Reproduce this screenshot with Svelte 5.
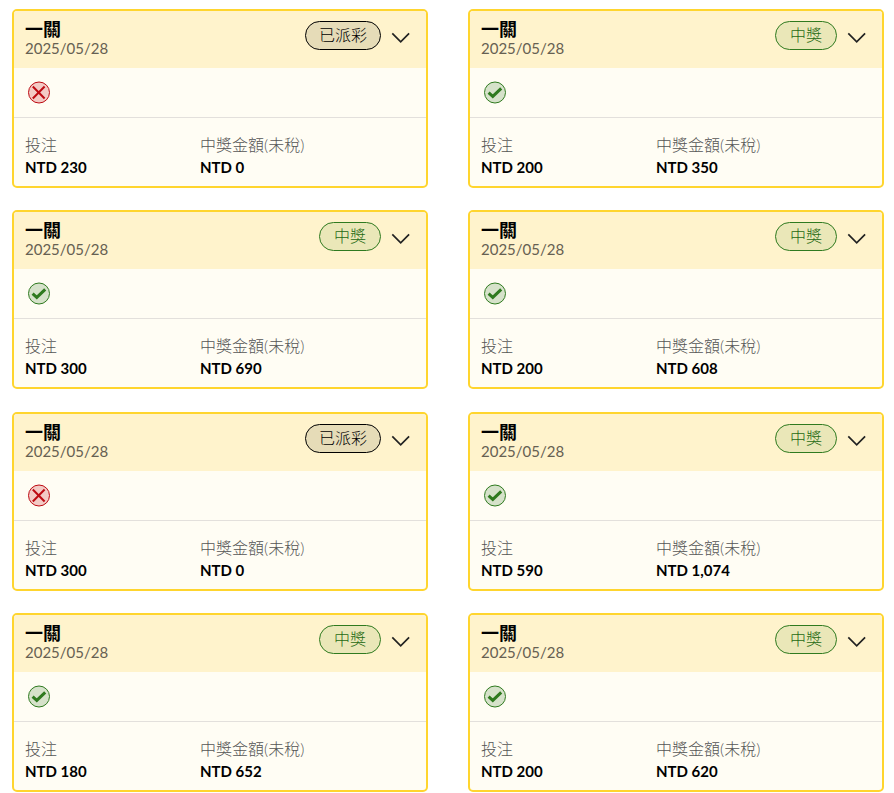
<script>
  const bets = [
    { id: 1, won: false, stake: '230', payout: '0' },
    { id: 2, won: true, stake: '200', payout: '350' },
    { id: 3, won: true, stake: '300', payout: '690' },
    { id: 4, won: true, stake: '200', payout: '608' },
    { id: 5, won: false, stake: '300', payout: '0' },
    { id: 6, won: true, stake: '590', payout: '1,074' },
    { id: 7, won: true, stake: '180', payout: '652' },
    { id: 8, won: true, stake: '200', payout: '620' }
  ];
  let selected = $state(null);
</script>

<main>
  {#each bets as bet (bet.id)}
    <article class:won={bet.won}>
      <header>
        <div class="heading">
          <h2>一關</h2>
          <time datetime="2025-05-28">2025/05/28</time>
        </div>
        <span class="status">{bet.won ? '中獎' : '已派彩'}</span>
        <button
          type="button"
          aria-label="展開"
          aria-expanded={selected === bet.id}
          onclick={() => (selected = selected === bet.id ? null : bet.id)}
        >
          <svg width="20" height="12" viewBox="0 0 20 12" aria-hidden="true">
            <path d="M1.3 1.3 9.7 9.8 18.1 1.3" fill="none" stroke="#222" stroke-width="1.7" />
          </svg>
        </button>
      </header>
      <div class="result">
        <svg width="24" height="24" viewBox="0 0 24 24" aria-hidden="true">
          {#if bet.won}
            <circle cx="12" cy="11.5" r="10.5" fill="#d6e2ca" stroke="#2f7a1f" />
            <path d="M5.6 11.6 9.8 15.4 18.2 7.4" fill="none" stroke="#2f7a1f" stroke-width="3" />
          {:else}
            <circle cx="12" cy="11.5" r="10.5" fill="#f3cac5" stroke="#bd0a12" />
            <path d="M5.8 5.5 17.6 17.5M17.6 5.5 5.8 17.5" fill="none" stroke="#bd0a12" stroke-width="2" />
          {/if}
        </svg>
      </div>
      <dl>
        <div>
          <dt>投注</dt>
          <dd>NTD {bet.stake}</dd>
        </div>
        <div>
          <dt>中獎金額(未稅)</dt>
          <dd>NTD {bet.payout}</dd>
        </div>
      </dl>
    </article>
  {/each}
</main>

<style>
  :global(body) {
    margin: 0;
    background: #fff;
  }
  main {
    box-sizing: border-box;
    min-height: 100vh;
    padding: 9px 10px 1px 12px;
    display: grid;
    grid-template-columns: 1fr 1fr;
    column-gap: 40px;
    row-gap: 22px;
    align-content: space-between;
    font-family: Lato, 'Noto Sans CJK TC', sans-serif;
    font-size: 16px;
    line-height: 20px;
    color: #000;
  }
  article {
    border: 2px solid #ffd52e;
    border-radius: 5px;
    background: #fffdf4;
    overflow: hidden;
  }
  header {
    display: flex;
    align-items: flex-start;
    padding: 9px 15px 9px 11px;
    background: #fff3cc;
  }
  .heading {
    flex: 1;
    display: flex;
    flex-direction: column;
  }
  h2 {
    margin: 0;
    font-size: 18px;
    line-height: 18px;
    font-weight: 700;
  }
  time {
    font-size: 15px;
    line-height: 21px;
    color: #666052;
  }
  .status {
    margin-top: 1px;
    padding: 3px 13px 4px;
    border: 1px solid #000;
    border-radius: 15px;
    background: #e6dcb8;
    font-weight: 300;
  }
  .won .status {
    padding: 3px 14px 4px;
    border-color: #2f7a1f;
    background: #eae7b8;
    color: #1f6a12;
  }
  button {
    margin: 12px 0 0 10px;
    padding: 0;
    border: 0;
    background: none;
    cursor: pointer;
  }
  svg {
    display: block;
  }
  .result {
    padding: 13px 13px 12px;
    border-bottom: 1px solid #e3e0dc;
  }
  dl {
    margin: 0;
    padding: 17px 11px 7px;
    display: flex;
  }
  dl div {
    flex: 0 0 175px;
  }
  dt {
    color: #555;
    font-weight: 300;
  }
  dd {
    margin: 0;
    font-size: 15px;
    line-height: 24px;
    font-weight: 700;
  }
</style>
